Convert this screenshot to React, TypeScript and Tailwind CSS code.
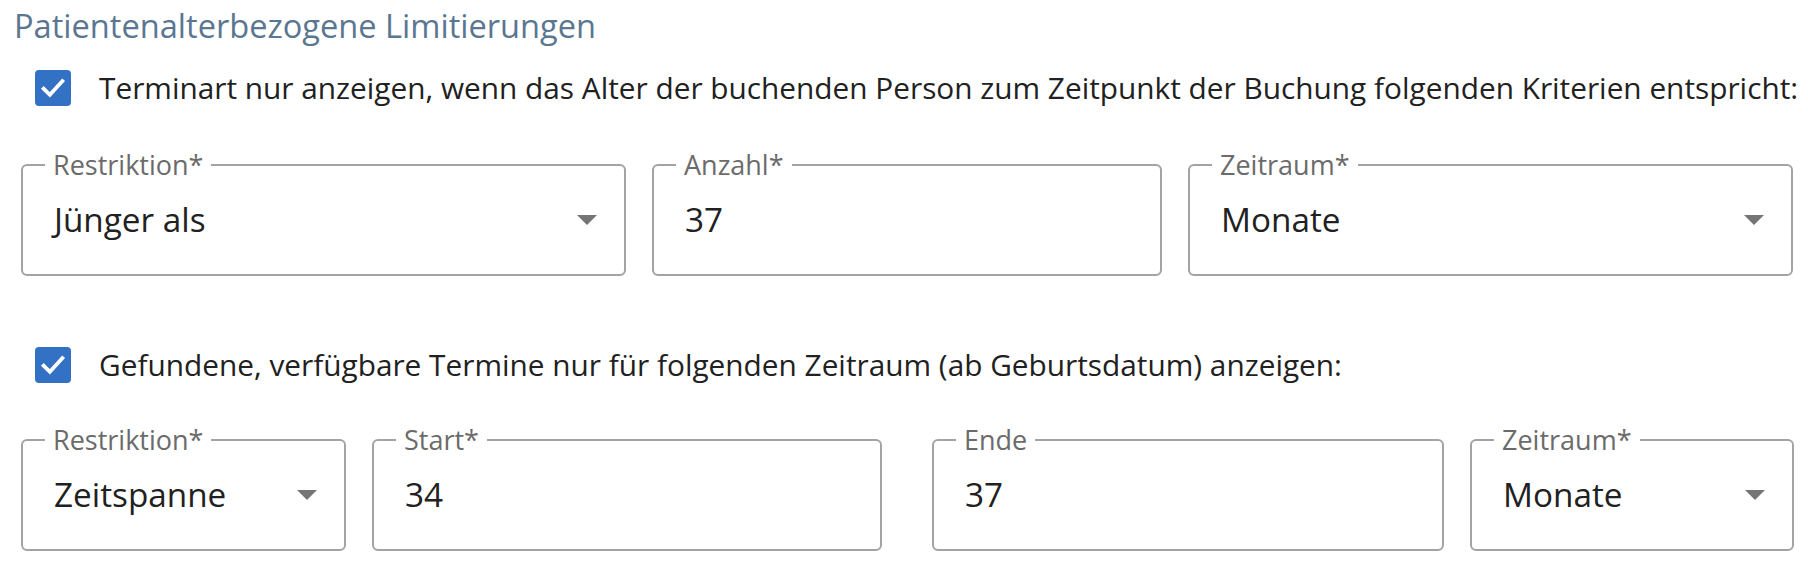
import React from "react";

type FieldProps = {
  label: string;
  value: string;
  select?: boolean;
  className?: string;
};

const Arrow = () => (
  <svg width="20" height="10" viewBox="0 0 20 10" className="shrink-0">
    <polygon points="0,0 20,0 10,10" fill="#757575" />
  </svg>
);

const Field = ({ label, value, select, className }: FieldProps) => (
  <div
    className={`relative h-[112px] rounded-[6px] border-2 border-[#a3a3a3] bg-white ${className ?? ""}`}
  >
    {/* Label sitzt auf der Rahmenlinie */}
    <span className="absolute left-[22px] top-[-17px] bg-white px-[8px] text-[27px] leading-[32px] text-[#6b6b6b]">
      {label}
    </span>
    <div className="flex h-full items-center justify-between pl-[31px] pr-[27px]">
      <span className="text-[33.3px] text-[#212121]">{value}</span>
      {select && <Arrow />}
    </div>
  </div>
);

const Check = ({ children }: { children: React.ReactNode }) => (
  <label className="flex items-center gap-[28px] pl-[35px]">
    <span className="flex h-[36px] w-[36px] shrink-0 items-center justify-center rounded-[4px] bg-[#3371c4]">
      <svg width="30" height="30" viewBox="0 0 24 24" fill="none">
        <path
          d="M4.5 12.5l5 5L19.5 6.5"
          stroke="white"
          strokeWidth="3"
          strokeLinecap="square"
        />
      </svg>
    </span>
    <span className="whitespace-nowrap text-[29.8px] leading-[40px] text-[#212121]">
      {children}
    </span>
  </label>
);

const App = () => {
  return (
    <div className="min-h-screen w-[1808px] bg-white pt-[6px] font-['Open_Sans',sans-serif]">
      <h1 className="pl-[14px] text-[32.6px] font-medium leading-[40px] text-[#5a7691]">
        Patientenalterbezogene Limitierungen
      </h1>

      <div className="mt-[22px]">
        <Check>
          Terminart nur anzeigen, wenn das Alter der buchenden Person zum
          Zeitpunkt der Buchung folgenden Kriterien entspricht:
        </Check>
      </div>

      {/* Erste Zeile */}
      <div className="mt-[56px] flex gap-[26px] pl-[21px]">
        <Field className="w-[605px]" label="Restriktion*" value="Jünger als" select />
        <Field className="w-[510px]" label="Anzahl*" value="37" />
        <Field className="w-[605px]" label="Zeitraum*" value="Monate" select />
      </div>

      <div className="mt-[69px]">
        <Check>
          Gefundene, verfügbare Termine nur für folgenden Zeitraum (ab
          Geburtsdatum) anzeigen:
        </Check>
      </div>

      {/* Zweite Zeile */}
      <div className="mt-[54px] flex pl-[21px]">
        <Field className="w-[325px]" label="Restriktion*" value="Zeitspanne" select />
        <Field className="ml-[26px] w-[510px]" label="Start*" value="34" />
        <Field className="ml-[50px] w-[512px]" label="Ende" value="37" />
        <Field className="ml-[26px] w-[324px]" label="Zeitraum*" value="Monate" select />
      </div>
    </div>
  );
};

export default App;
